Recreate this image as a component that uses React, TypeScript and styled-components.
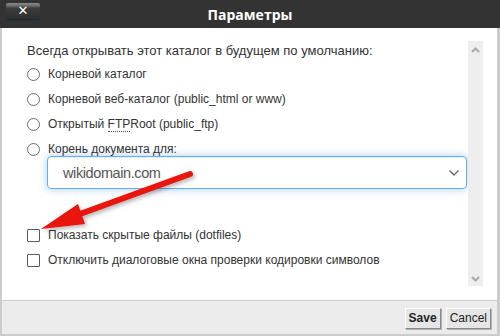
import React from "react";
import styled, { createGlobalStyle } from "styled-components";

const Global = createGlobalStyle`
  html, body { margin: 0; padding: 0; background: #ffffff; }
  body { font-family: "Liberation Sans", Arial, sans-serif; }
  * { box-sizing: border-box; }
`;

const Dialog = styled.div`
  position: relative;
  width: 500px;
  height: 336px;
  display: flex;
  flex-direction: column;
  background: #fff;
  overflow: hidden;
`;

const TitleBar = styled.div`
  height: 28px;
  flex: none;
  background: #333333;
  display: grid;
  grid-template-columns: 1fr auto 1fr;
  align-items: start;
`;

const CloseButton = styled.button`
  justify-self: start;
  margin: 3px 0 0 6px;
  width: 34px;
  height: 16px;
  padding: 0;
  border: none;
  border-radius: 2px;
  background: linear-gradient(#8a8a8a 0px, #6a6a6a 3px, #3c3c3c 5px, #2e2e2e 100%);
  box-shadow: 0 1px 0 #1c2a2c, 0 2px 1px rgba(20, 60, 70, 0.6);
  color: #fff;
  font-family: "DejaVu Sans", sans-serif;
  font-weight: bold;
  font-size: 13px;
  line-height: 16px;
  display: flex;
  align-items: center;
  justify-content: center;
`;

const Title = styled.div`
  font-family: "Open Sans", "Liberation Sans", sans-serif;
  font-weight: bold;
  font-size: 14px;
  color: #ffffff;
  line-height: 28px;
  margin-top: 1px;
`;

const Body = styled.div`
  flex: 1;
  display: flex;
  border-left: 2px solid #cccccc;
  border-right: 3px solid #cccccc;
  min-height: 0;
`;

const Content = styled.div`
  flex: 1;
  padding: 15px 0 0 25px;
  color: #333333;
  font-size: 13px;
`;

const Heading = styled.div`
  line-height: 15px;
  margin-bottom: 4px;
`;

const OptionRow = styled.label`
  display: flex;
  align-items: center;
  height: 25px;
  gap: 8px;
  font-size: 12px;
  line-height: 15px;
`;

const Radio = styled.span`
  width: 13px;
  height: 13px;
  border-radius: 50%;
  border: 1px solid #6e6e6e;
  background: #fff;
  flex: none;
`;

const Check = styled.span`
  width: 13px;
  height: 13px;
  border: 1px solid #5a5a5a;
  border-radius: 1px;
  background: #fff;
  flex: none;
`;

const Abbr = styled.span`
  border-bottom: 1px dotted #555;
  line-height: 13px;
`;

const Select = styled.div`
  margin: -6px 0 0 20px;
  width: 420px;
  height: 33px;
  border: 1px solid #66afe9;
  border-radius: 4px;
  box-shadow: inset 0 1px 1px rgba(0, 0, 0, 0.075), 0 0 8px rgba(102, 175, 233, 0.6);
  display: flex;
  align-items: center;
  justify-content: space-between;
  padding: 0 6px 0 15px;
  font-size: 14.5px;
  letter-spacing: -0.4px;
  color: #555555;
`;

const Spacer = styled.div`
  height: 34px;
`;

const Scrollbar = styled.div`
  width: 15px;
  margin: 13px 14px 14px 0;
  background: #eeeeee;
  display: flex;
  flex-direction: column;
  justify-content: space-between;
  align-items: center;
  padding: 6px 0 4px;
`;

const Footer = styled.div`
  height: 36px;
  flex: none;
  background: #ececec;
  border-top: 1px solid #cccccc;
  border-left: 2px solid #cccccc;
  border-right: 3px solid #cccccc;
  border-bottom: 2px solid #cccccc;
  display: flex;
  justify-content: flex-end;
  align-items: center;
  gap: 5px;
  padding: 1px 6px 0 0;
`;

const Button = styled.button<{ $primary?: boolean }>`
  height: 21px;
  padding: 0 3px;
  font-family: "Liberation Sans", Arial, sans-serif;
  font-size: 12px;
  font-weight: ${(p) => (p.$primary ? "bold" : "normal")};
  color: #222;
  background: #e6e6e6;
  border: 1px solid;
  border-color: #ffffff #8a8a8a #8a8a8a #ffffff;
  box-shadow: 1px 1px 0 #b0b0b0;
  border-radius: 0;
`;

const ArrowOverlay = styled.svg`
  position: absolute;
  left: 0;
  top: 0;
  pointer-events: none;
`;

const Chevron = ({ up }: { up?: boolean }) => (
  <svg width="9" height="6" viewBox="0 0 9 6">
    <path
      d={up ? "M1 5 L4.5 1.5 L8 5" : "M1 1 L4.5 4.5 L8 1"}
      fill="none"
      stroke="#a8a8a8"
      strokeWidth="2"
    />
  </svg>
);

export default function App() {
  return (
    <>
      <Global />
      <Dialog>
        <TitleBar>
          <CloseButton>✕</CloseButton>
          <Title>Параметры</Title>
          <div />
        </TitleBar>
        <Body>
          <Content>
            <Heading>Всегда открывать этот каталог в будущем по умолчанию:</Heading>
            <OptionRow>
              <Radio />
              Корневой каталог
            </OptionRow>
            <OptionRow>
              <Radio />
              Корневой веб-каталог (public_html or www)
            </OptionRow>
            <OptionRow>
              <Radio />
              <span>
                Открытый <Abbr>FTP</Abbr>Root (public_ftp)
              </span>
            </OptionRow>
            <OptionRow>
              <Radio />
              Корень документа для:
            </OptionRow>
            <Select>
              <span>wikidomain.com</span>
              <svg width="12" height="8" viewBox="0 0 12 8">
                <path d="M1.5 1.5 L6 6 L10.5 1.5" fill="none" stroke="#666" strokeWidth="1.4" />
              </svg>
            </Select>
            <Spacer />
            <OptionRow>
              <Check />
              Показать скрытые файлы (dotfiles)
            </OptionRow>
            <OptionRow>
              <Check />
              Отключить диалоговые окна проверки кодировки символов
            </OptionRow>
          </Content>
          <Scrollbar>
            <Chevron up />
            <Chevron />
          </Scrollbar>
        </Body>
        <Footer>
          <Button $primary>Save</Button>
          <Button>Cancel</Button>
        </Footer>
        <ArrowOverlay width="500" height="336" viewBox="0 0 500 336">
          <defs>
            <filter id="sh" x="-20%" y="-20%" width="140%" height="140%">
              <feDropShadow dx="2" dy="2" stdDeviation="2" floodColor="#000" floodOpacity="0.3" />
            </filter>
          </defs>
          <g filter="url(#sh)" fill="#e8120c">
            <line x1="80" y1="214" x2="190" y2="174" stroke="#e8120c" strokeWidth="6" strokeLinecap="round" />
            <polygon points="41,229 78,204 85,224" />
          </g>
        </ArrowOverlay>
      </Dialog>
    </>
  );
}
